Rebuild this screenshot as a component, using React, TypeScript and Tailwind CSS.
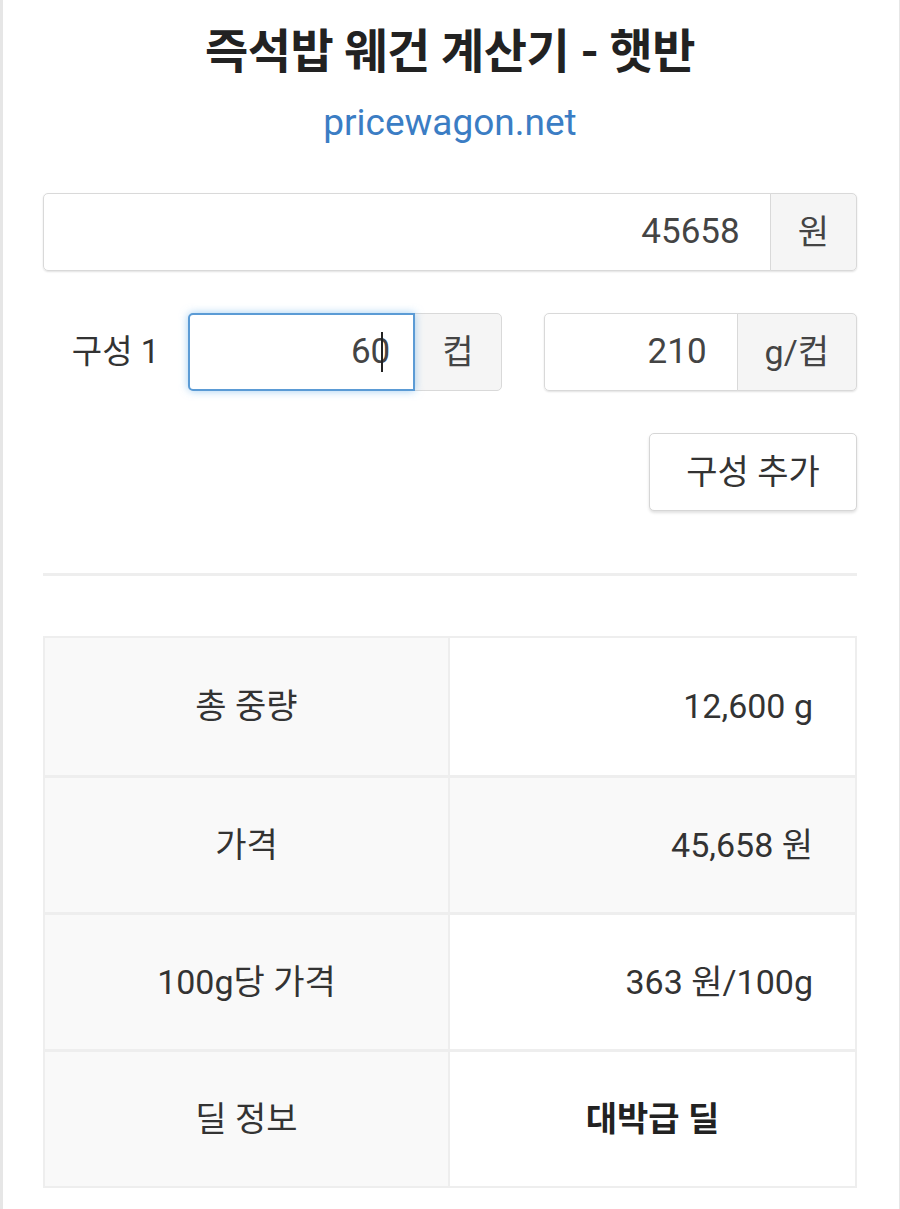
import React from 'react';

const font = { fontFamily: "Roboto, 'Noto Sans CJK KR', sans-serif" };

function Addon({ children }: { children: React.ReactNode }) {
  return (
    <div className="flex items-center justify-center px-[27px] bg-[#f5f5f5] border border-[#d9d9d9] rounded-r-[5px] -ml-px text-[34px] text-[#444]">
      {children}
    </div>
  );
}

function Field({ value, focused }: { value: string; focused?: boolean }) {
  return (
    <div
      className={
        focused
          ? 'relative z-10 flex-1 flex items-center justify-end pr-[30px] bg-white border-2 border-[#5b9bd5] rounded-l-[5px] shadow-[0_0_8px_rgba(102,175,233,0.6)] text-[35px] text-[#444]'
          : 'flex-1 flex items-center justify-end pr-[30px] bg-white border border-[#d9d9d9] rounded-l-[5px] text-[35px] text-[#444]'
      }
    >
      <span>{value}</span>
      {focused && <span className="w-[2px] h-[40px] bg-[#222] -ml-[9px]" />}
    </div>
  );
}

const rows = [
  { label: '총 중량', value: '12,600 g', stripe: false },
  { label: '가격', value: '45,658 원', stripe: true },
  { label: '100g당 가격', value: '363 원/100g', stripe: false },
  { label: '딜 정보', value: '대박급 딜', stripe: false, strong: true },
];

export default function App() {
  return (
    <div style={font} className="min-h-[1209px] bg-white border-l-[3px] border-r border-[#e6e6e6] pl-[40px] pr-[42px] pt-[22px] text-[#333]">
      {/* Header */}
      <h1 className="h-[60px] flex items-center justify-center text-[47px] font-bold text-[#222] tracking-[-0.5px]">
        즉석밥 웨건 계산기 - 햇반
      </h1>
      <div className="mt-[16px] h-[50px] flex items-center justify-center text-[37px] text-[#3b7dc4]">
        pricewagon.net
      </div>

      {/* Price */}
      <div className="mt-[45px] flex h-[78px] shadow-[0_1px_2px_rgba(0,0,0,0.12)] rounded-[5px]">
        <Field value="45658" />
        <Addon>원</Addon>
      </div>

      {/* Composition */}
      <div className="mt-[42px] flex h-[78px]">
        <div className="w-[145px] flex items-center justify-center text-[33px] text-[#333]">구성 1</div>
        <div className="flex-1 flex gap-[42px]">
          <div className="flex-1 flex">
            <Field value="60" focused />
            <Addon>컵</Addon>
          </div>
          <div className="flex-1 flex shadow-[0_1px_2px_rgba(0,0,0,0.12)] rounded-[5px]">
            <Field value="210" />
            <Addon>g/컵</Addon>
          </div>
        </div>
      </div>

      <div className="mt-[42px] flex justify-end">
        <button className="h-[78px] w-[208px] bg-white border border-[#d6d6d6] rounded-[5px] shadow-[0_2px_3px_rgba(0,0,0,0.12)] text-[34px] text-[#333]">
          구성 추가
        </button>
      </div>

      <hr className="mt-[62px] border-t-[3px] border-[#eeeeee]" />

      {/* Results */}
      <div className="mt-[60px] border-2 border-[#eeeeee]">
        {rows.map((r, i) => (
          <div key={r.label} className={i > 0 ? 'grid grid-cols-2 h-[137px] border-t-[3px] border-[#eeeeee]' : 'grid grid-cols-2 h-[137px]'}>
            <div className="flex items-center justify-center bg-[#f9f9f9] border-r-2 border-[#eeeeee] text-[34px]">
              {r.label}
            </div>
            <div
              className={
                r.strong
                  ? 'flex items-center justify-center bg-white text-[34px] font-bold text-[#222]'
                  : r.stripe
                  ? 'flex items-center justify-end pr-[42px] bg-[#f9f9f9] text-[34px]'
                  : 'flex items-center justify-end pr-[42px] bg-white text-[34px]'
              }
            >
              {r.value}
            </div>
          </div>
        ))}
      </div>
    </div>
  );
}
